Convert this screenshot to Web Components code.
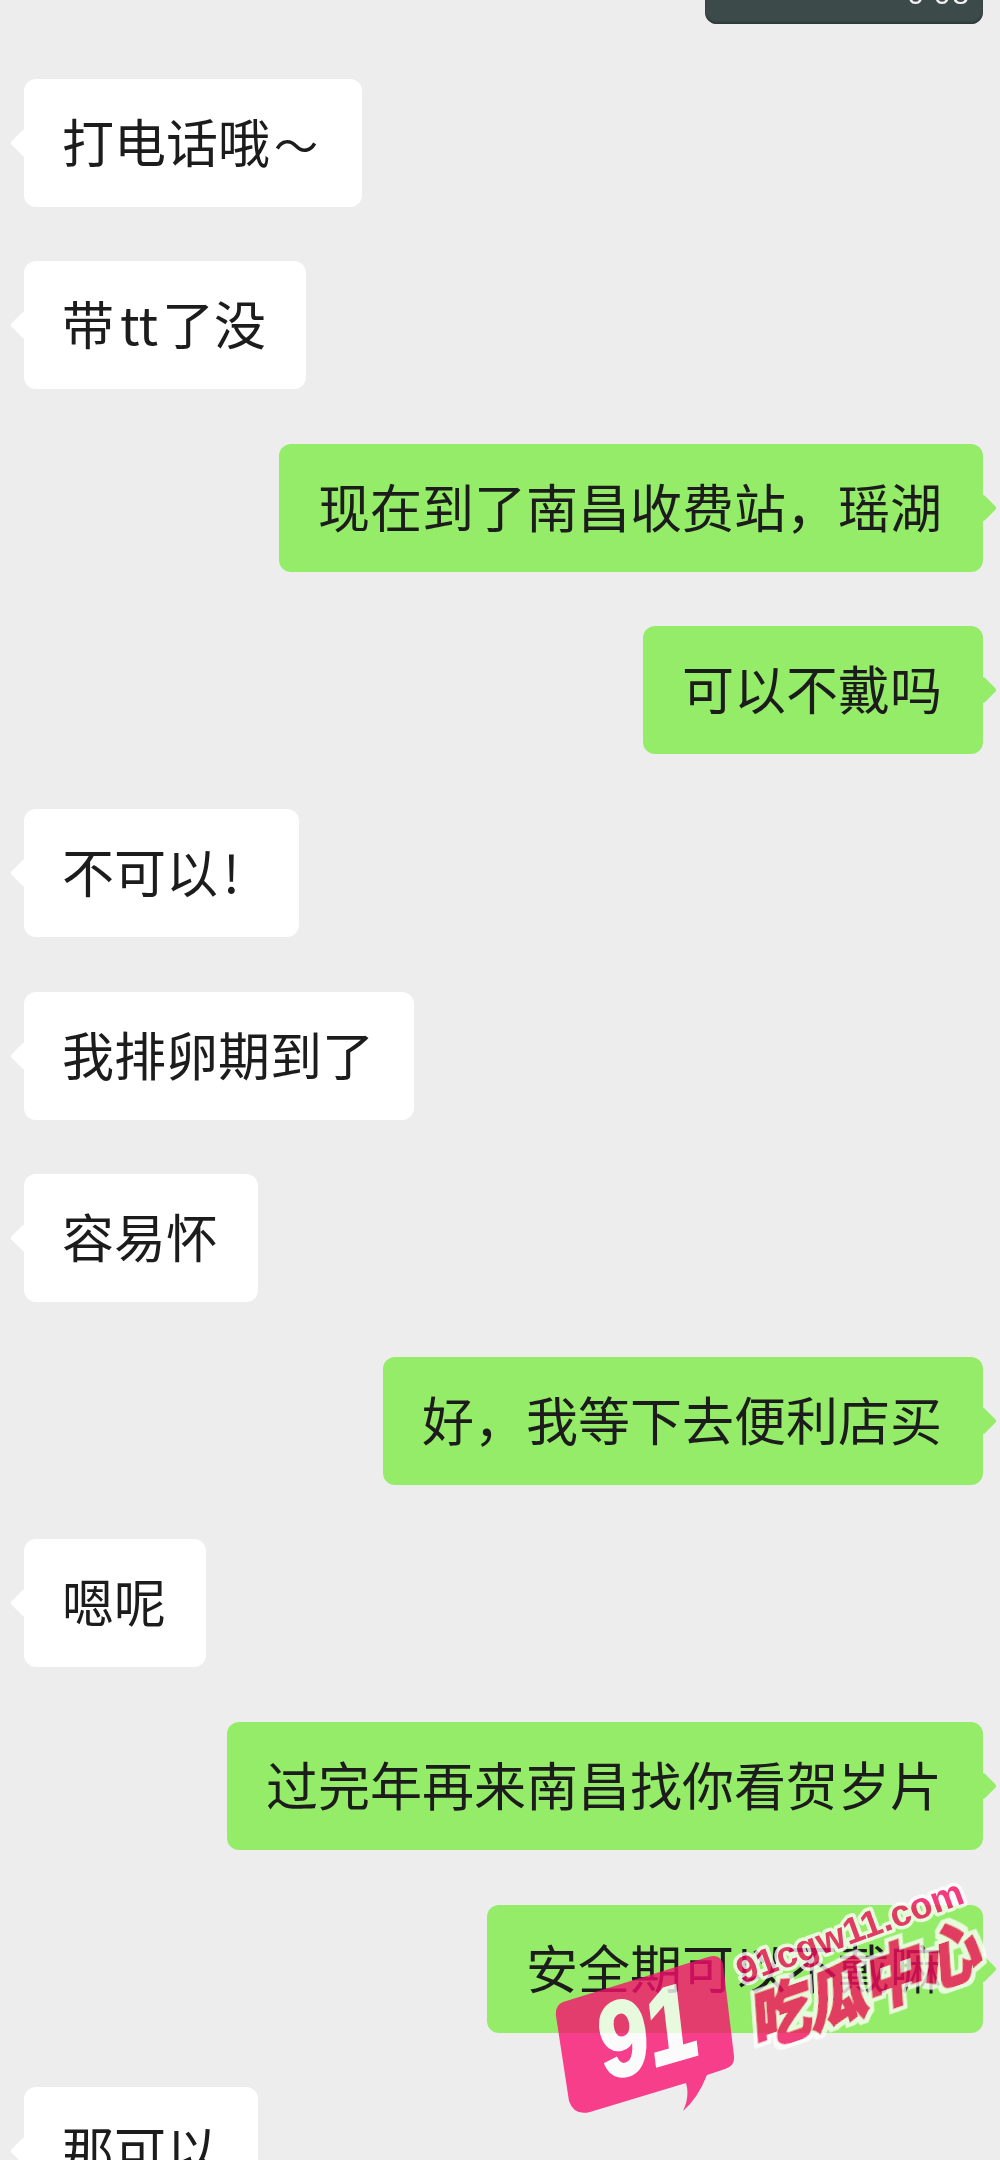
<!DOCTYPE html>
<html lang="zh-CN">
<head>
<meta charset="utf-8">
<title>聊天记录</title>
<style>
    html, body {
        margin: 0;
        height: 2160px;
        overflow: hidden;
        background: #ededed;
    }
</style>
</head>
<body>
<chat-thread>
    <voice-bubble>0'08</voice-bubble>
    <chat-bubble>打电话哦<span style="font-size: 44px; margin: 0 4px">～</span></chat-bubble>
    <chat-bubble>带<span style="margin: 0 4px 0 6px">tt</span>了没</chat-bubble>
    <chat-bubble side="me">现在到了南昌收费站，瑶湖</chat-bubble>
    <chat-bubble side="me">可以不戴吗</chat-bubble>
    <chat-bubble>不可以<span style="margin: 0 19px 0 5px">!</span></chat-bubble>
    <chat-bubble>我排卵期到了</chat-bubble>
    <chat-bubble>容易怀</chat-bubble>
    <chat-bubble side="me">好，我等下去便利店买</chat-bubble>
    <chat-bubble>嗯呢</chat-bubble>
    <chat-bubble side="me">过完年再来南昌找你看贺岁片</chat-bubble>
    <chat-bubble side="me">安全期可以不戴嘛</chat-bubble>
    <chat-bubble>那可以</chat-bubble>
</chat-thread>
<site-watermark></site-watermark>

<script>
class ChatThread extends HTMLElement {
    constructor() {
        super();

        const shadowRoot = this.attachShadow({ mode: 'open' });
        shadowRoot.innerHTML = `
            <style>
                :host {
                    display: flex;
                    flex-direction: column;
                    gap: 54.6px;
                    padding: 0 17px 0 24px;
                    font-family: "Noto Sans CJK SC", "Liberation Sans", sans-serif;
                }
            </style>
            <slot></slot>
        `;
    }
}

class VoiceBubble extends HTMLElement {
    constructor() {
        super();

        const shadowRoot = this.attachShadow({ mode: 'open' });
        shadowRoot.innerHTML = `
            <style>
                :host {
                    display: block;
                    box-sizing: border-box;
                    align-self: flex-end;
                    position: relative;
                    width: 278px;
                    height: 24px;
                    overflow: hidden;
                    border-radius: 0 0 12px 12px;
                    background: #3d4a4a;
                    box-shadow: inset 0 -2px 2px #2e3838;
                    color: #f2f2f2;
                }
                span {
                    position: absolute;
                    right: 12px;
                    bottom: 15px;
                    font: 30px/30px "Liberation Sans", sans-serif;
                    letter-spacing: 2px;
                    filter: blur(0.5px);
                }
            </style>
            <span><slot></slot></span>
        `;
    }
}

class ChatBubble extends HTMLElement {
    constructor() {
        super();

        const shadowRoot = this.attachShadow({ mode: 'open' });
        shadowRoot.innerHTML = `
            <style>
                :host {
                    display: block;
                    box-sizing: border-box;
                    align-self: flex-start;
                    position: relative;
                    height: 128px;
                    padding: 0 40px 0 38px;
                    border-radius: 12px;
                    background: #ffffff;
                    color: #1c1c1c;
                    font-size: 52px;
                    line-height: 124px;
                    white-space: nowrap;
                }
                :host([side="me"]) {
                    align-self: flex-end;
                    padding: 0 41px 0 39px;
                    background: #95ec69;
                }
                :host::before {
                    content: "";
                    position: absolute;
                    top: 54px;
                    left: -10px;
                    width: 20px;
                    height: 20px;
                    border-radius: 3px;
                    background: inherit;
                    transform: rotate(45deg);
                }
                :host([side="me"])::before {
                    left: auto;
                    right: -10px;
                }
                span {
                    display: block;
                    position: relative;
                    filter: blur(0.5px);
                }
            </style>
            <span><slot></slot></span>
        `;
    }
}

class SiteWatermark extends HTMLElement {
    constructor() {
        super();

        const shadowRoot = this.attachShadow({ mode: 'open' });
        shadowRoot.innerHTML = `
            <style>
                :host {
                    display: block;
                    position: absolute;
                    left: 540px;
                    top: 1860px;
                    width: 460px;
                    height: 270px;
                    opacity: 0.78;
                }
                svg {
                    display: block;
                    overflow: visible;
                }
                .num {
                    font: italic 700 105px "Liberation Sans", sans-serif;
                    fill: #ffffff;
                    stroke: #ffffff;
                    stroke-width: 3px;
                }
                .url {
                    font: 700 37px "Liberation Sans", sans-serif;
                    fill: #f50b5f;
                    stroke: #ffffff;
                    stroke-width: 7px;
                    stroke-linejoin: round;
                    paint-order: stroke;
                }
                .name {
                    font: 700 60px "Noto Sans CJK SC", sans-serif;
                    fill: #f50b5f;
                    stroke: #f50b5f;
                    stroke-width: 3.5px;
                    filter: url(#outline);
                }
            </style>
            <svg width="460" height="270" viewBox="0 0 460 270">
                <defs>
                    <filter id="outline" x="-10%" y="-30%" width="120%" height="160%">
                        <feMorphology in="SourceAlpha" operator="dilate" radius="4" result="wide"/>
                        <feFlood flood-color="#ffffff"/>
                        <feComposite in2="wide" operator="in" result="edge"/>
                        <feMerge>
                            <feMergeNode in="edge"/>
                            <feMergeNode in="SourceGraphic"/>
                        </feMerge>
                    </filter>
                </defs>
                <path fill="#fa0d6f" d="M23 142 L168 97 Q180 93 183 104 L194 196 Q195 206 185 209 L167 215 Q158 238 143 251 Q150 236 146 223 L50 252 Q34 256 29 241 L16 156 Q15 145 23 142 Z"/>
                <text class="num" transform="translate(68 220) rotate(-16) scale(.85 1)">91</text>
                <text class="url" transform="translate(202 124) rotate(-20)">91cgw11.com</text>
                <text class="name" transform="translate(216 188) rotate(-19) skewX(-15) scale(1 1.08)">吃瓜中心</text>
            </svg>
        `;
    }
}

window.customElements.define('chat-thread', ChatThread);
window.customElements.define('voice-bubble', VoiceBubble);
window.customElements.define('chat-bubble', ChatBubble);
window.customElements.define('site-watermark', SiteWatermark);
</script>
</body>
</html>
